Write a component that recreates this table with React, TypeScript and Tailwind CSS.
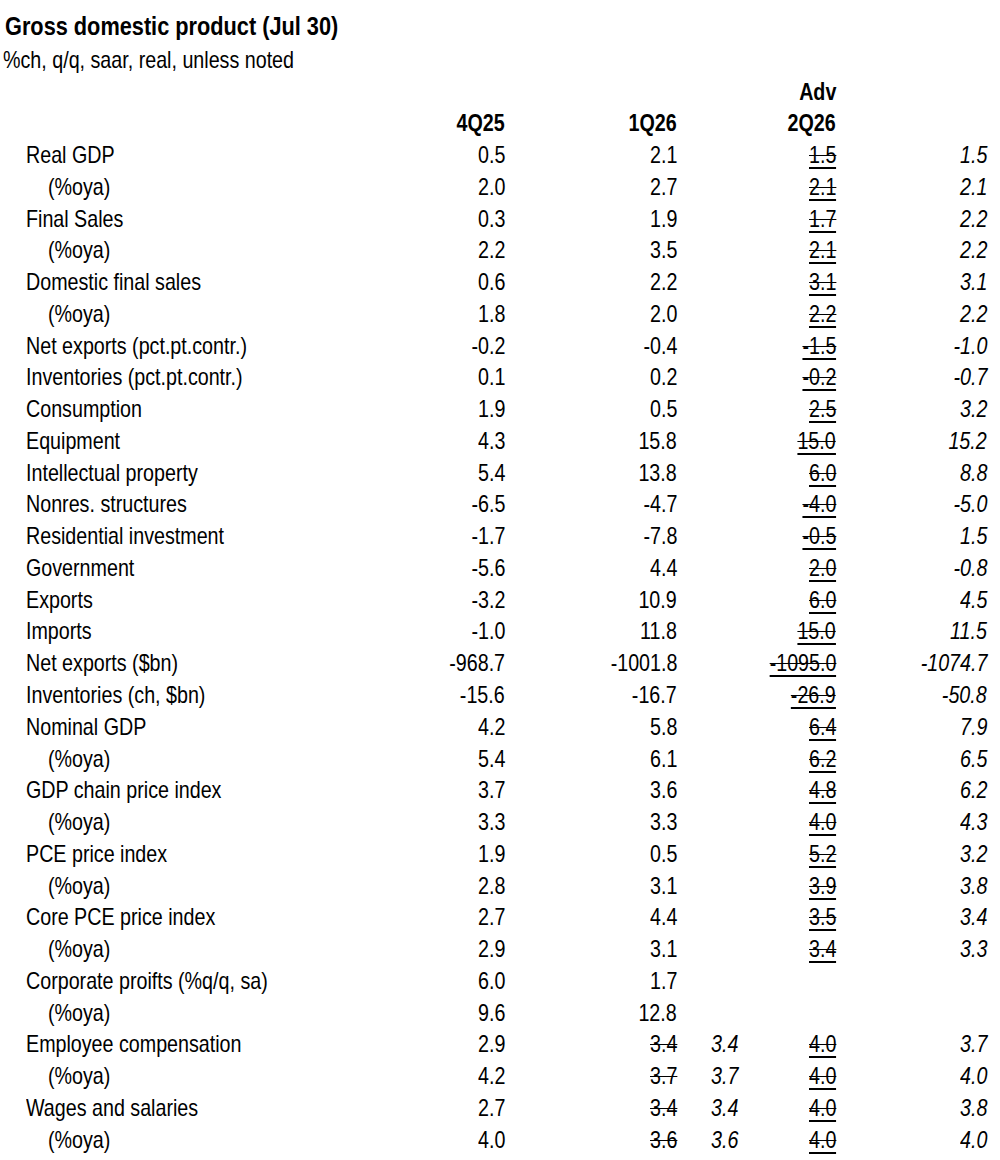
type Row = {
  label: string;
  sub?: boolean;
  q4: string;
  q1: string;
  q1rev?: string;
  adv?: string;
  est?: string;
};

const rows: Row[] = [
  { label: "Real GDP", q4: "0.5", q1: "2.1", adv: "1.5", est: "1.5" },
  { label: "(%oya)", sub: true, q4: "2.0", q1: "2.7", adv: "2.1", est: "2.1" },
  { label: "Final Sales", q4: "0.3", q1: "1.9", adv: "1.7", est: "2.2" },
  { label: "(%oya)", sub: true, q4: "2.2", q1: "3.5", adv: "2.1", est: "2.2" },
  { label: "Domestic final sales", q4: "0.6", q1: "2.2", adv: "3.1", est: "3.1" },
  { label: "(%oya)", sub: true, q4: "1.8", q1: "2.0", adv: "2.2", est: "2.2" },
  { label: "Net exports (pct.pt.contr.)", q4: "-0.2", q1: "-0.4", adv: "-1.5", est: "-1.0" },
  { label: "Inventories (pct.pt.contr.)", q4: "0.1", q1: "0.2", adv: "-0.2", est: "-0.7" },
  { label: "Consumption", q4: "1.9", q1: "0.5", adv: "2.5", est: "3.2" },
  { label: "Equipment", q4: "4.3", q1: "15.8", adv: "15.0", est: "15.2" },
  { label: "Intellectual property", q4: "5.4", q1: "13.8", adv: "6.0", est: "8.8" },
  { label: "Nonres. structures", q4: "-6.5", q1: "-4.7", adv: "-4.0", est: "-5.0" },
  { label: "Residential investment", q4: "-1.7", q1: "-7.8", adv: "-0.5", est: "1.5" },
  { label: "Government", q4: "-5.6", q1: "4.4", adv: "2.0", est: "-0.8" },
  { label: "Exports", q4: "-3.2", q1: "10.9", adv: "6.0", est: "4.5" },
  { label: "Imports", q4: "-1.0", q1: "11.8", adv: "15.0", est: "11.5" },
  { label: "Net exports ($bn)", q4: "-968.7", q1: "-1001.8", adv: "-1095.0", est: "-1074.7" },
  { label: "Inventories (ch, $bn)", q4: "-15.6", q1: "-16.7", adv: "-26.9", est: "-50.8" },
  { label: "Nominal GDP", q4: "4.2", q1: "5.8", adv: "6.4", est: "7.9" },
  { label: "(%oya)", sub: true, q4: "5.4", q1: "6.1", adv: "6.2", est: "6.5" },
  { label: "GDP chain price index", q4: "3.7", q1: "3.6", adv: "4.8", est: "6.2" },
  { label: "(%oya)", sub: true, q4: "3.3", q1: "3.3", adv: "4.0", est: "4.3" },
  { label: "PCE price index", q4: "1.9", q1: "0.5", adv: "5.2", est: "3.2" },
  { label: "(%oya)", sub: true, q4: "2.8", q1: "3.1", adv: "3.9", est: "3.8" },
  { label: "Core PCE price index", q4: "2.7", q1: "4.4", adv: "3.5", est: "3.4" },
  { label: "(%oya)", sub: true, q4: "2.9", q1: "3.1", adv: "3.4", est: "3.3" },
  { label: "Corporate proifts (%q/q, sa)", q4: "6.0", q1: "1.7" },
  { label: "(%oya)", sub: true, q4: "9.6", q1: "12.8" },
  { label: "Employee compensation", q4: "2.9", q1: "3.4", q1rev: "3.4", adv: "4.0", est: "3.7" },
  { label: "(%oya)", sub: true, q4: "4.2", q1: "3.7", q1rev: "3.7", adv: "4.0", est: "4.0" },
  { label: "Wages and salaries", q4: "2.7", q1: "3.4", q1rev: "3.4", adv: "4.0", est: "3.8" },
  { label: "(%oya)", sub: true, q4: "4.0", q1: "3.6", q1rev: "3.6", adv: "4.0", est: "4.0" },
];

const grid = "grid grid-cols-[432px_73px_172px_61px_98px_151px]";

// no narrow face installed, so squeeze Liberation Sans to Arial Narrow width
function L({ children }: { children: React.ReactNode }) {
  return <span className="inline-block whitespace-nowrap scale-x-[0.82] origin-left">{children}</span>;
}

function R({ children, className = "" }: { children: React.ReactNode; className?: string }) {
  return (
    <span className={`inline-block whitespace-nowrap scale-x-[0.82] origin-right ${className}`}>
      {children}
    </span>
  );
}

export default function App() {
  return (
    <div className="w-[1000px] h-[1160px] bg-white text-black font-['Liberation_Sans',Arial,sans-serif] text-[24px]">
      <div className="pt-[8px] pl-[5px] h-[44px] leading-[36px] text-[26.5px] font-bold">
        <L>Gross domestic product (Jul 30)</L>
      </div>
      <div className="pl-[3px] h-[32px] leading-[32px]">
        <L>%ch, q/q, saar, real, unless noted</L>
      </div>

      <div className={`${grid} h-[31px] leading-[31px] font-bold`}>
        <div />
        <div />
        <div />
        <div />
        <div className="text-right">
          <R>Adv</R>
        </div>
        <div />
      </div>
      <div className={`${grid} h-[32px] leading-[32px] font-bold`}>
        <div />
        <div className="text-right">
          <R>4Q25</R>
        </div>
        <div className="text-right">
          <R>1Q26</R>
        </div>
        <div />
        <div className="text-right">
          <R>2Q26</R>
        </div>
        <div />
      </div>

      {rows.map((r, i) => (
        <div key={i} className={`${grid} h-[31.77px] leading-[31.77px]`}>
          <div className={r.sub ? "pl-[48px]" : "pl-[26px]"}>
            <L>{r.label}</L>
          </div>
          <div className="text-right">
            <R>{r.q4}</R>
          </div>
          <div className="text-right">
            <R className={r.q1rev ? "line-through decoration-1" : ""}>{r.q1}</R>
          </div>
          <div className="text-right italic">{r.q1rev && <R>{r.q1rev}</R>}</div>
          <div className="text-right">
            {r.adv && (
              <R className="leading-none border-b-2 border-black line-through decoration-1">{r.adv}</R>
            )}
          </div>
          <div className="text-right italic">{r.est && <R>{r.est}</R>}</div>
        </div>
      ))}
    </div>
  );
}
